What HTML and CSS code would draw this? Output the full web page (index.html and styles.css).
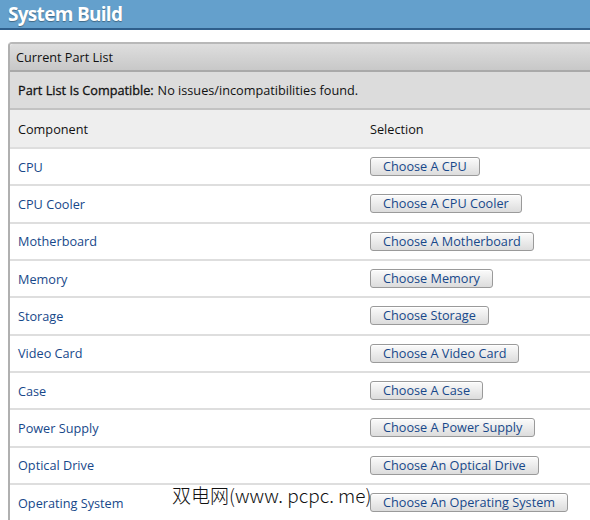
FILE: index.html
```html
<!DOCTYPE html>
<html>
<head>
<meta charset="utf-8">
<link rel="stylesheet" href="styles.css">
</head>
<body>
<div class="page">
  <header class="topbar"><h1 class="title">System Build</h1></header>
  <section class="panel">
    <div class="panel-head">Current Part List</div>
    <div class="compat"><b>Part List Is Compatible:</b> No issues/incompatibilities found.</div>
    <div class="grid">
      <div class="row head"><div class="c1">Component</div><div class="c2">Selection</div></div>
      <div class="row"><div class="c1"><a class="link">CPU</a></div><div class="c2"><button class="btn">Choose A CPU</button></div></div>
      <div class="row"><div class="c1"><a class="link">CPU Cooler</a></div><div class="c2"><button class="btn">Choose A CPU Cooler</button></div></div>
      <div class="row"><div class="c1"><a class="link">Motherboard</a></div><div class="c2"><button class="btn">Choose A Motherboard</button></div></div>
      <div class="row"><div class="c1"><a class="link">Memory</a></div><div class="c2"><button class="btn">Choose Memory</button></div></div>
      <div class="row"><div class="c1"><a class="link">Storage</a></div><div class="c2"><button class="btn">Choose Storage</button></div></div>
      <div class="row"><div class="c1"><a class="link">Video Card</a></div><div class="c2"><button class="btn">Choose A Video Card</button></div></div>
      <div class="row"><div class="c1"><a class="link">Case</a></div><div class="c2"><button class="btn">Choose A Case</button></div></div>
      <div class="row"><div class="c1"><a class="link">Power Supply</a></div><div class="c2"><button class="btn">Choose A Power Supply</button></div></div>
      <div class="row"><div class="c1"><a class="link">Optical Drive</a></div><div class="c2"><button class="btn">Choose An Optical Drive</button></div></div>
      <div class="row"><div class="c1"><a class="link">Operating System</a></div><div class="c2"><button class="btn">Choose An Operating System</button></div></div>
    </div>
  </section>
  <div class="watermark">双电网(www. pcpc. me)</div>
</div>
</body>
</html>
```
FILE: styles.css
```css
html, body {
  margin: 0;
  padding: 0;
  background: #ffffff;
  overflow: hidden;
}
.page {
  position: relative;
  width: 590px;
  height: 520px;
  overflow: hidden;
  font-family: "Open Sans", "Liberation Sans", sans-serif;
  font-size: 12.7px;
  color: #111;
}
.topbar {
  height: 28px;
  background: #64a0cc;
  border-bottom: 2px solid #2f5f8c;
  padding-left: 8px;
  display: flex;
  align-items: center;
}
.title {
  margin: 0;
  font-size: 19px;
  font-weight: bold;
  color: #fff;
  letter-spacing: -0.7px;
  text-shadow: 0 1px 1px rgba(0, 0, 0, 0.35);
}
.panel {
  margin: 12px -20px 0 8px;
  border-left: 2px solid #b0b0b0;
  border-top: 2px solid #b8b8b8;
  border-top-left-radius: 4px;
}
.panel-head {
  height: 26px;
  padding-left: 6px;
  display: flex;
  align-items: center;
  background: linear-gradient(#dedede, #c8c8c8);
  border-bottom: 2px solid #a9a9a9;
  border-top-left-radius: 3px;
}
.compat {
  height: 36px;
  padding-left: 8px;
  display: flex;
  align-items: center;
  background: #dcdcdc;
  border-bottom: 2px solid #c2c2c2;
}
.compat b {
  font-weight: normal;
  -webkit-text-stroke: 0.3px #111;
  margin-right: 4px;
}
.row {
  display: grid;
  grid-template-columns: 352px 1fr;
  height: 37.33px;
  box-sizing: border-box;
  border-bottom: 2px solid #dedede;
  align-items: center;
}
.row.head {
  height: 39px;
  background: #eeeeee;
}
.c1, .c2 {
  padding-left: 8px;
}
.link {
  color: #17488a;
}
.btn {
  font-family: inherit;
  font-size: 12.7px;
  color: #17488a;
  height: 19px;
  line-height: 15px;
  padding: 0 12px;
  border: 1px solid #9a9a9a;
  border-radius: 3px;
  background: linear-gradient(#fbfbfb, #dcdcdc);
  box-shadow: inset 0 1px 0 #fff;
  margin: 0;
}
.watermark {
  position: absolute;
  left: 172px;
  top: 484px;
  font-family: "Noto Sans CJK SC", sans-serif;
  font-size: 19px;
  line-height: 22px;
  color: #111;
  font-weight: 300;
}
```
